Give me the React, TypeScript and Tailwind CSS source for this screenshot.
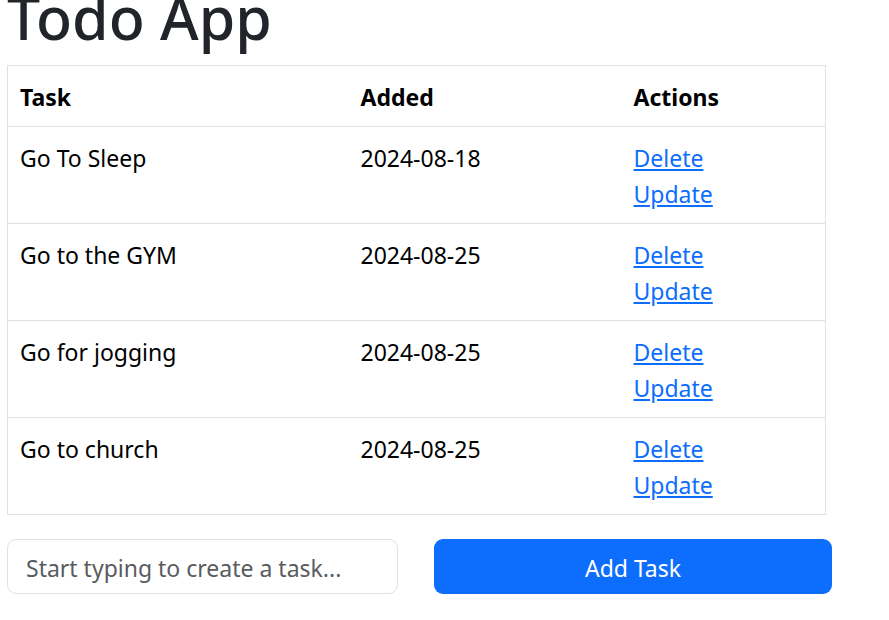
const tasks = [
  { name: "Go To Sleep", added: "2024-08-18" },
  { name: "Go to the GYM", added: "2024-08-25" },
  { name: "Go for jogging", added: "2024-08-25" },
  { name: "Go to church", added: "2024-08-25" },
]

export default function App() {
  return (
    <div className="min-h-screen overflow-hidden bg-white px-[7px] font-['Noto_Sans',sans-serif] text-[23px] leading-[36px] text-[#212529]">
      <h1 className="-mt-[19px] mb-[12px] text-[59px] font-medium leading-[72px]">Todo App</h1>

      <table className="w-[819px] border-collapse border border-[#dee2e6] text-black">
        <thead>
          <tr className="border-b border-[#dee2e6]">
            <th className="w-[341px] px-[12px] pt-[13px] pb-[11px] text-left font-bold">Task</th>
            <th className="w-[273px] px-[12px] pt-[13px] pb-[11px] text-left font-bold">Added</th>
            <th className="px-[12px] pt-[13px] pb-[11px] text-left font-bold">Actions</th>
          </tr>
        </thead>
        <tbody>
          {tasks.map((t) => (
            <tr key={t.name} className="border-b border-[#dee2e6] align-top">
              <td className="px-[12px] pt-[13px] pb-[11px]">{t.name}</td>
              <td className="px-[12px] pt-[13px] pb-[11px]">{t.added}</td>
              <td className="px-[12px] pt-[13px] pb-[11px]">
                <a href="#" className="block w-fit text-[#0d6efd] underline">Delete</a>
                <a href="#" className="block w-fit text-[#0d6efd] underline">Update</a>
              </td>
            </tr>
          ))}
        </tbody>
      </table>

      <div className="mt-[24px] flex gap-[36px]">
        <input
          type="text"
          placeholder="Start typing to create a task..."
          className="h-[55px] w-[391px] rounded-[9px] border border-[#dee2e6] px-[18px] pt-[2px] text-[23px] text-[#212529] outline-none placeholder:text-[#595c5f]"
        />
        <button className="h-[55px] w-[398px] rounded-[9px] bg-[#0d6efd] pt-[2px] text-[23px] text-white">
          Add Task
        </button>
      </div>
    </div>
  )
}
